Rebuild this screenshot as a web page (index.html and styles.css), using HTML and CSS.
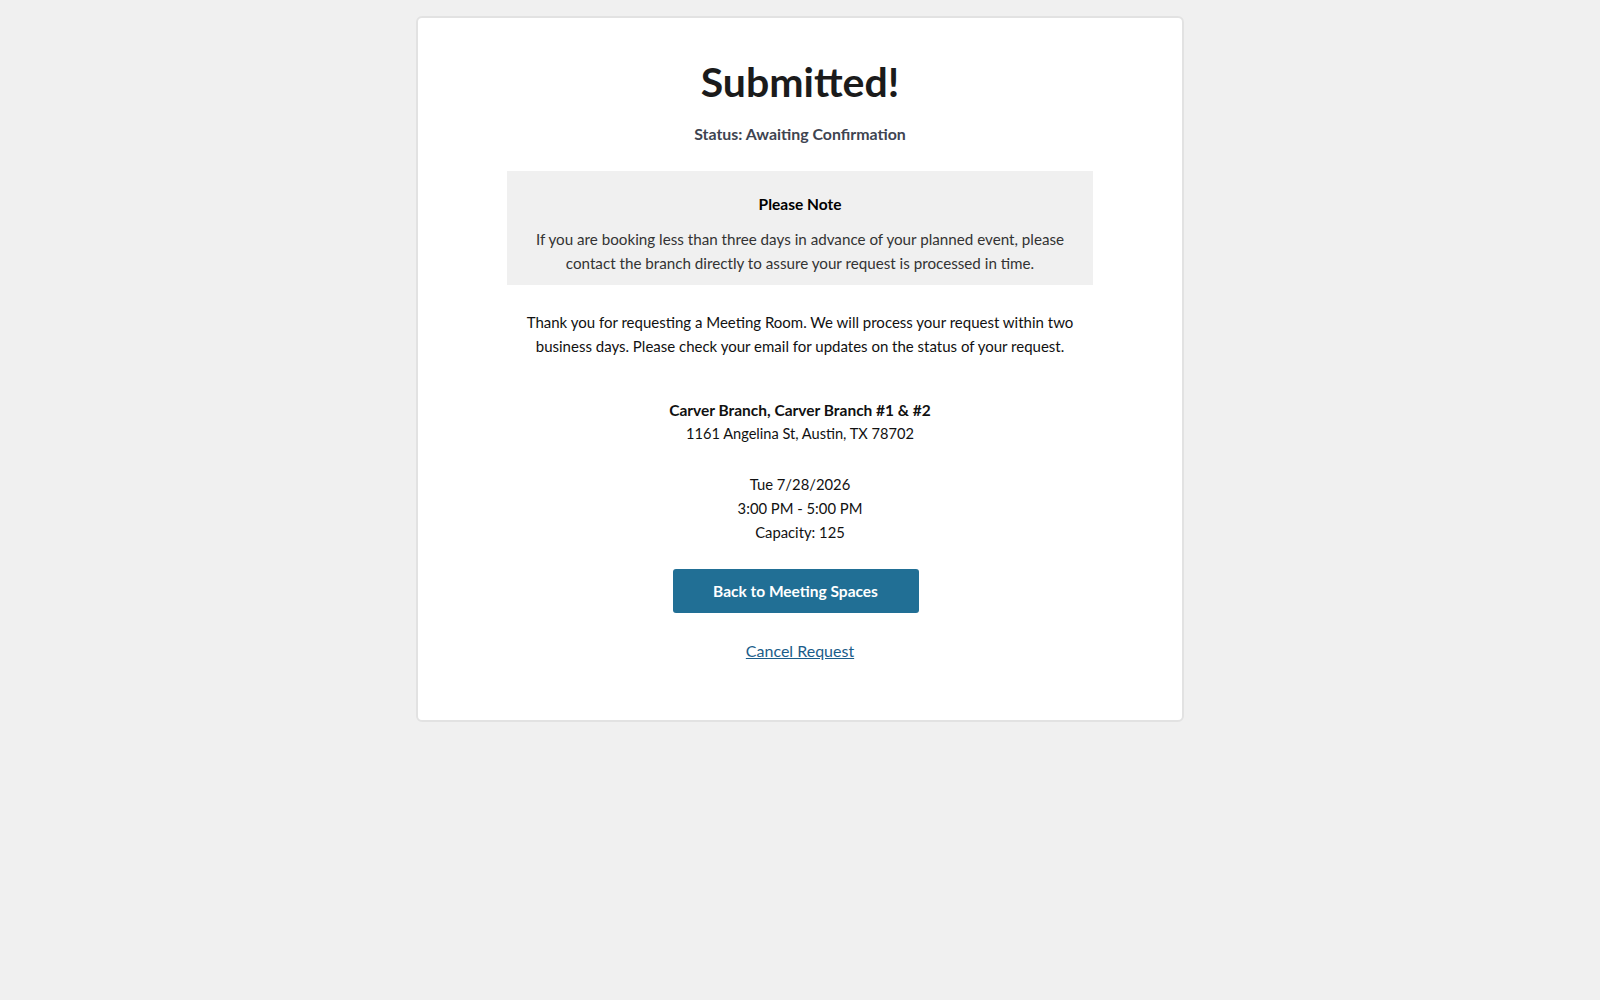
FILE: index.html
```html
<!DOCTYPE html>
<html lang="en">
<head>
<meta charset="utf-8">
<title>Submitted!</title>
<link rel="stylesheet" href="styles.css">
</head>
<body>
<main class="card">
  <h1 class="title">Submitted!</h1>
  <p class="status">Status: Awaiting Confirmation</p>
  <section class="note">
    <h2 class="note-title">Please Note</h2>
    <p class="note-text">If you are booking less than three days in advance of your planned event, please contact the branch directly to assure your request is processed in time.</p>
  </section>
  <p class="thanks">Thank you for requesting a Meeting Room. We will process your request within two business days. Please check your email for updates on the status of your request.</p>
  <div class="location">
    <div class="branch">Carver Branch, Carver Branch #1 &amp; #2</div>
    <div class="address">1161 Angelina St, Austin, TX 78702</div>
  </div>
  <div class="when">
    <div>Tue 7/28/2026</div>
    <div>3:00 PM - 5:00 PM</div>
    <div>Capacity: 125</div>
  </div>
  <a class="btn" href="#">Back to Meeting Spaces</a>
  <a class="cancel" href="#">Cancel Request</a>
</main>
</body>
</html>
```

FILE: styles.css
```css
* { box-sizing: border-box; }
html, body { margin: 0; padding: 0; }
body {
  background: #f0f0f0;
  font-family: "Lato", "Noto Sans", sans-serif;
  font-size: 16px;
  line-height: 24px;
  color: #111;
  min-height: 1000px;
}
.card {
  width: 768px;
  margin: 16px auto 0;
  background: #fff;
  border: 2px solid #e2e2e2;
  border-radius: 6px;
  padding: 40px 89px 57px;
  display: flex;
  flex-direction: column;
  align-items: center;
  text-align: center;
}
.title {
  margin: 0;
  font-size: 41px;
  line-height: 48px;
  font-weight: 700;
  color: #1b1b1b;
}
.status {
  margin: 16px 0 0;
  font-size: 15.9px;
  font-weight: 700;
  color: #3e4451;
}
.note {
  margin-top: 25px;
  width: 100%;
  background: #f0f0f0;
  padding: 21px 20px 10px;
}
.note-title {
  margin: 0;
  font-size: 15.5px;
  line-height: 24px;
  font-weight: 700;
  color: #000;
}
.note-text {
  margin: 11px 0 0;
  color: #333;
  font-size: 15.2px;
}
.thanks {
  margin: 25px 0 0;
  font-size: 15px;
}
.location {
  margin-top: 40px;
  font-size: 15px;
}
.branch { font-weight: 700; font-size: 15.5px; }
.address { font-size: 14.6px; }
.when {
  margin-top: 26px;
  font-size: 14.8px;
}
.btn {
  margin-top: 25px;
  margin-right: 9px;
  display: flex;
  align-items: center;
  justify-content: center;
  width: 246px;
  height: 44px;
  background: #216f95;
  color: #fff;
  border-radius: 3px;
  font-weight: 700;
  font-size: 15.5px;
  text-decoration: none;
}
.cancel {
  margin-top: 26px;
  color: #1a5d8a;
  font-size: 16px;
  text-decoration: underline;
}
```
